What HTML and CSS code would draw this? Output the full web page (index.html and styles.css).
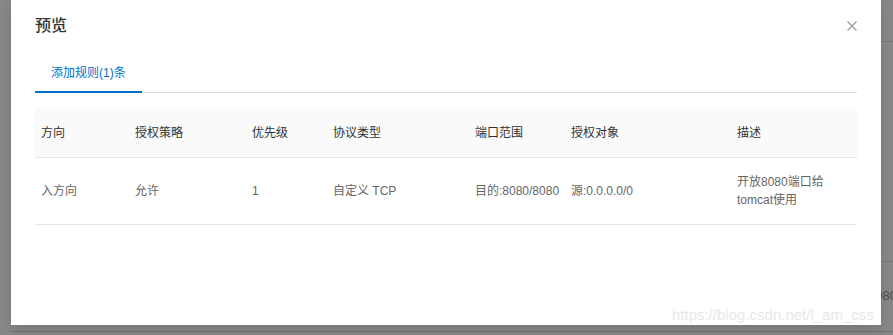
FILE: index.html
```html
<!DOCTYPE html>
<html lang="zh-CN">
<head>
  <meta charset="UTF-8" />
  <meta name="viewport" content="width=device-width, initial-scale=1.0" />
  <title>预览</title>
  <link rel="stylesheet" href="styles.css">
</head>
<body>
  <!-- page behind the mask -->
  <div class="page-bg">
    <div class="bg-line bg-line-top"></div>
    <div class="bg-line bg-line-mid"></div>
    <div class="bg-cell">8080</div>
    <div class="bg-line bg-line-bottom"></div>
  </div>

  <div class="modal">
    <div class="modal-header">
      <span class="modal-title">预览</span>
      <span class="modal-close">
        <svg width="10" height="10" viewBox="0 0 10 10"><path d="M0.5 0.5L9.5 9.5M9.5 0.5L0.5 9.5" stroke="#999" stroke-width="1.2" fill="none"/></svg>
      </span>
    </div>

    <div class="tabs">
      <div class="tab active">添加规则(1)条</div>
    </div>

    <table class="rules">
      <thead>
        <tr>
          <th class="c1">方向</th>
          <th class="c2">授权策略</th>
          <th class="c3">优先级</th>
          <th class="c4">协议类型</th>
          <th class="c5">端口范围</th>
          <th class="c6">授权对象</th>
          <th class="c7">描述</th>
        </tr>
      </thead>
      <tbody>
        <tr>
          <td>入方向</td>
          <td>允许</td>
          <td>1</td>
          <td>自定义 TCP</td>
          <td class="nowrap">目的:8080/8080</td>
          <td>源:0.0.0.0/0</td>
          <td>开放8080端口给<br>tomcat使用</td>
        </tr>
      </tbody>
    </table>
  </div>

  <div class="watermark">https://blog.csdn.net/l_am_css</div>
</body>
</html>
```

FILE: styles.css
```css
body { margin: 0; height: 335px; overflow: hidden; background: #878787; position: relative; font-family: "Liberation Sans", "Noto Sans CJK SC", sans-serif; }

.page-bg { position: absolute; inset: 0; }
.bg-line { position: absolute; height: 1px; background: #767676; }
.bg-line-top { left: 881px; right: 0; top: 41px; }
.bg-line-mid { left: 881px; right: 0; top: 261px; }
.bg-line-bottom { left: 11px; right: 0; top: 331px; background: #6c6c6c; }
.bg-cell { position: absolute; left: 868px; top: 288px; font-size: 13px; color: #4d4d4d; }

.modal { position: absolute; left: 11px; top: 0; width: 870px; height: 325px; background: #fff; box-sizing: border-box; padding: 0 24px; box-shadow: 0 4px 10px rgba(0,0,0,0.12); }

.modal-header { display: flex; justify-content: space-between; align-items: center; height: 50px; padding-top: 1px; box-sizing: border-box; }
.modal-title { font-size: 16px; line-height: 22px; color: #333; font-weight: 500; }
.modal-close { display: flex; margin-right: 0; }

.tabs { display: flex; margin-top: 6px; border-bottom: 1px solid #ddd; }
.tab { padding: 8px 16px 9px; font-size: 12px; line-height: 18px; color: #333; margin-bottom: -1px; border-bottom: 2px solid transparent; }
.tab.active { color: #0070cc; border-bottom-color: #0070cc; }

.rules { width: 100%; border-collapse: collapse; margin-top: 15px; font-size: 12px; line-height: 18px; table-layout: fixed; }
.rules th { background: #fafafa; color: #333; font-weight: normal; text-align: left; padding: 16px 6px 15px; border-bottom: 1px solid #e5e5e5; }
.rules td { color: #666; padding: 15px 6px; border-bottom: 1px solid #e5e5e5; vertical-align: middle; }
.rules td.nowrap { white-space: nowrap; }

.c1 { width: 82px; }
.c2 { width: 105px; }
.c3 { width: 69px; }
.c4 { width: 130px; }
.c5 { width: 84px; }
.c6 { width: 154px; }

.watermark { position: absolute; left: 672px; top: 306px; font-family: "Liberation Sans", sans-serif; font-size: 15px; color: rgba(225,225,225,0.8); }
```
